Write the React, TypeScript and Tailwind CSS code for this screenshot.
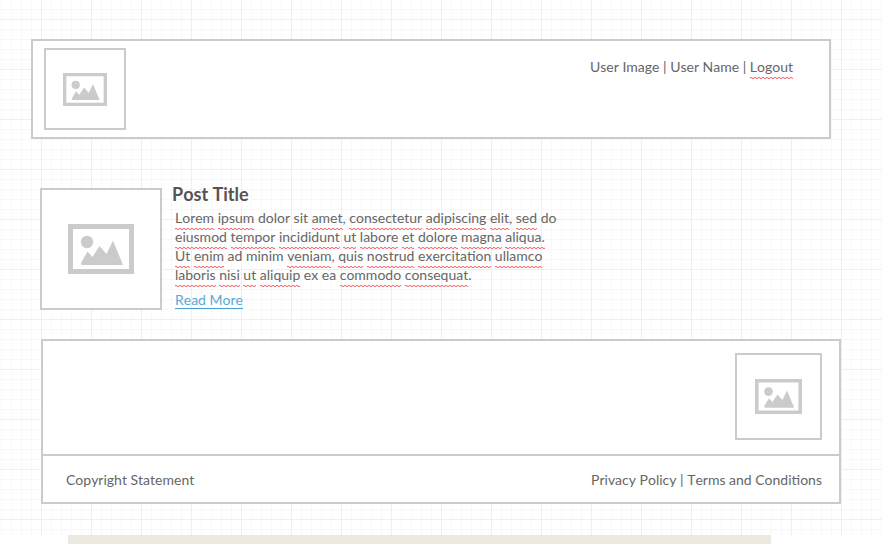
import React from "react";

function Bad({ children }: { children: React.ReactNode }) {
  return (
    <span className="bg-[linear-gradient(90deg,#f4767c_50%,#fde2e3_50%),linear-gradient(90deg,#fde2e3_50%,#f4767c_50%)] bg-[length:4px_1px,4px_1px] bg-[position:0_calc(100%-1px),0_100%] bg-repeat-x pb-[4px]">
      {children}
    </span>
  );
}

function Picture({ className }: { className: string }) {
  return (
    <svg viewBox="0 0 66 50" preserveAspectRatio="none" className={className} fill="#cbcbcb">
      <path fillRule="evenodd" d="M0 0h66v50H0zM5 5v40h56V5z" />
      <circle cx="19" cy="18" r="6.2" />
      <path d="M13 39l6.500-11.500 5 5.500 7-11 7 8 6.500-13.500L55 41H14Q13 41 13 39z" />
    </svg>
  );
}

export default function App() {
  return (
    <div className="h-[544px] w-[882px] overflow-hidden bg-white font-['Lato',sans-serif] text-[14px] text-[#666] [font-kerning:none]">
      <div className="flex h-[535px] flex-col bg-[linear-gradient(90deg,#efefef_1px,transparent_1px),linear-gradient(#efefef_1px,transparent_1px),linear-gradient(90deg,#f8f8f8_1px,transparent_1px),linear-gradient(#f8f8f8_1px,transparent_1px)] bg-[length:50px_50px,50px_50px,10px_10px,10px_10px] bg-[position:41px_0,0_19px,1px_0,0_9px] pt-[39px]">
        <header className="ml-[31px] flex h-[100px] w-[800px] items-start justify-between border-2 border-[#cbcbcb] bg-white pt-[7px] pr-9 pl-[11px]">
          <div className="flex size-[82px] items-center justify-center border-2 border-[#cbcbcb]">
            <Picture className="h-[33px] w-11" />
          </div>
          <div className="mt-[9px] leading-[19px] whitespace-nowrap">
            User Image | User Name | <Bad>Logout</Bad>
          </div>
        </header>
        <main className="mt-[49px] ml-10 flex h-[122px]">
          <div className="flex size-[122px] items-center justify-center border-2 border-[#cbcbcb] bg-white">
            <Picture className="h-[50px] w-[66px]" />
          </div>
          <article className="ml-[10px] -mt-[6px]">
            <h1 className="text-[18px] leading-[24px] font-bold text-[#555]">Post Title</h1>
            <div className="mt-[2px] ml-[3px] leading-[19px] whitespace-nowrap">
              <p><Bad>Lorem</Bad> <Bad>ipsum</Bad> dolor sit <Bad>amet</Bad>, <Bad>consectetur</Bad> <Bad>adipiscing</Bad> <Bad>elit</Bad>, <Bad>sed</Bad> do</p>
              <p><Bad>eiusmod</Bad> <Bad>tempor</Bad> <Bad>incididunt</Bad> <Bad>ut</Bad> <Bad>labore</Bad> <Bad>et</Bad> <Bad>dolore</Bad> <Bad>magna</Bad> <Bad>aliqua.</Bad></p>
              <p><Bad>Ut</Bad> <Bad>enim</Bad> ad minim <Bad>veniam</Bad>, <Bad>quis</Bad> <Bad>nostrud</Bad> <Bad>exercitation</Bad> <Bad>ullamco</Bad></p>
              <p><Bad>laboris</Bad> <Bad>nisi</Bad> <Bad>ut</Bad> <Bad>aliquip</Bad> ex ea <Bad>commodo</Bad> <Bad>consequat</Bad>.</p>
              <a className="mt-[6px] inline-block h-[19px] border-b border-[#4a9fd0] text-[#58a9d5]">Read More</a>
            </div>
          </article>
        </main>
        <footer className="mt-[29px] ml-[41px] h-[165px] w-[800px] border-2 border-[#cbcbcb] bg-white">
          <div className="flex h-[115px] justify-end border-b-2 border-[#cbcbcb] pt-3 pr-[17px]">
            <div className="flex size-[87px] items-center justify-center border-2 border-[#cbcbcb]">
              <Picture className="h-[35px] w-[47px]" />
            </div>
          </div>
          <div className="flex justify-between pt-[14px] pr-[17px] pl-[23px] leading-[19px]">
            <span>Copyright Statement</span>
            <span>Privacy Policy | Terms and Conditions</span>
          </div>
        </footer>
      </div>
      <div className="ml-[68px] h-[9px] w-[703px] bg-[#eceae0]" />
    </div>
  );
}
